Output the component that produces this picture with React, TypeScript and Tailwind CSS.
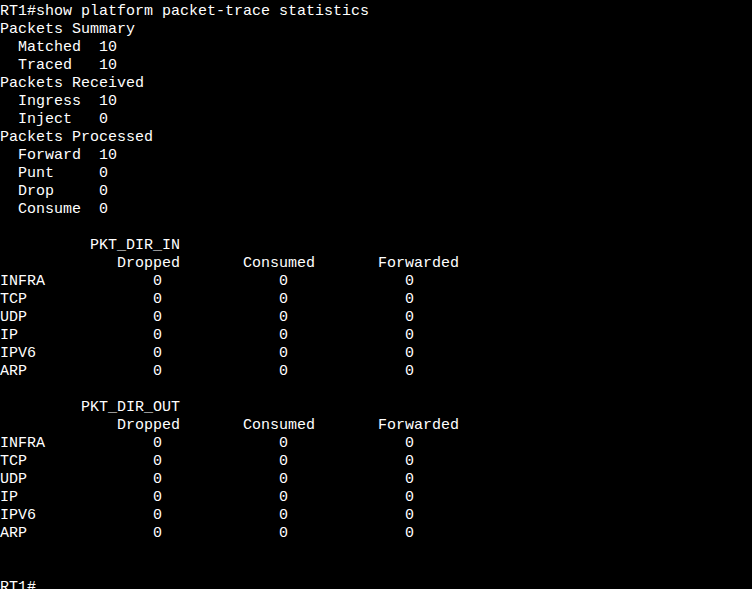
export default function App() {
  const pad = (s: string, n: number) => s + " ".repeat(Math.max(0, n - s.length));

  // one row of the per-protocol table: label, then three counters
  const row = (label: string) => pad(pad(pad(label, 17) + "0", 31) + "0", 45) + "0";
  const protocols = ["INFRA", "TCP", "UDP", "IP", "IPV6", "ARP"];
  const header = pad(pad(" ".repeat(13) + "Dropped", 27) + "Consumed", 42) + "Forwarded";

  const lines = [
    "RT1#show platform packet-trace statistics",
    "Packets Summary",
    "  Matched  10",
    "  Traced   10",
    "Packets Received",
    "  Ingress  10",
    "  Inject   0",
    "Packets Processed",
    "  Forward  10",
    "  Punt     0",
    "  Drop     0",
    "  Consume  0",
    "",
    "          PKT_DIR_IN",
    header,
    ...protocols.map(row),
    "",
    "         PKT_DIR_OUT",
    header,
    ...protocols.map(row),
    "",
    "",
    "RT1#",
  ];

  return (
    <div className="w-[752px] h-[589px] bg-black overflow-hidden">
      <pre className="m-0 pt-[3px] text-white text-[15px] leading-[18px] font-['Liberation_Mono',monospace] whitespace-pre">
        {lines.join("\n")}
      </pre>
    </div>
  );
}
